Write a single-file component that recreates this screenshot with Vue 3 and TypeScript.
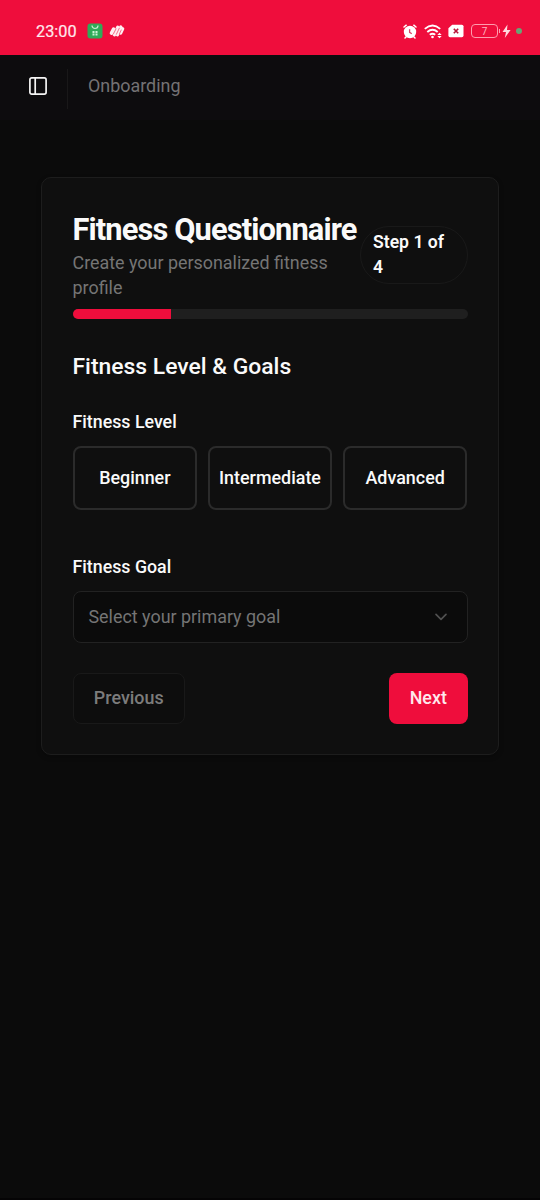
<script setup lang="ts">
import { ref } from 'vue'

const levels = ['Beginner', 'Intermediate', 'Advanced']
const step = ref(1)
const totalSteps = 4
</script>

<template>
  <div class="screen">
    <div class="status">
      <span class="time">23:00</span>
      <svg class="app-icon" width="16" height="16" viewBox="0 0 16 16">
        <rect x="0.5" y="0.5" width="15" height="15" rx="3" fill="#2fab58" />
        <path d="M5 2.5a3 3 0 0 0 6 0" fill="none" stroke="#c5ebcf" stroke-width="1.2" />
        <path d="M5.5 8h2v2h-2zM8.5 8h2v2h-2zM5.5 10.5h2v2h-2zM8.5 10.5h2v2h-2z" fill="#c9f3d5" />
      </svg>
      <svg class="brand-icon" width="16" height="14" viewBox="0 0 16 14" fill="none" stroke="#ffeff2" stroke-linecap="round">
        <path d="M2.5 9.2L4.6 5.2" stroke-width="3.6" />
        <path d="M5.4 10.8L8.8 3.2" stroke-width="3.4" />
        <path d="M8.4 10.8L11.8 3" stroke-width="3.2" />
        <path d="M11.6 9L13.6 4.8" stroke-width="3.4" />
        <path d="M4.4 10L7 4.9M7.4 10.3L10.3 4.2M10.5 9.8L12.2 6" stroke="#ef3a5f" stroke-width="0.7" />
      </svg>
      <div class="status-right">
        <svg class="alarm" width="14" height="15" viewBox="0 0 14 15">
          <circle cx="7" cy="8" r="6.2" fill="#fff" />
          <path d="M1 3L3.2 1.2M13 3L10.8 1.2M3 13L2 14M11 13L12 14" stroke="#fff" stroke-width="1.5" stroke-linecap="round" />
          <path d="M6.6 5.2V8.4L8.8 9.8" fill="none" stroke="#d9446a" stroke-width="1.3" />
        </svg>
        <svg class="wifi" width="19" height="15" viewBox="0 0 19 15" fill="none" stroke="#fff" stroke-width="1.9">
          <path d="M0.8 4.9Q8.5 -1.7 16.2 4.9M3.3 8Q8.5 3.6 13.7 8M5.8 10.8Q8.5 8.7 11.2 10.8" />
          <circle cx="8.5" cy="13" r="1.3" fill="#fff" stroke="none" />
          <path d="M13.3 11L15.5 8.8L17.7 11ZM13.3 12L15.5 14.2L17.7 12Z" fill="#fff" stroke="none" />
        </svg>
        <svg class="sim" width="16" height="14" viewBox="0 0 16 14">
          <path d="M4.2 0.7H13.8Q15.5 0.7 15.5 2.3V11.6Q15.5 13.2 13.8 13.2H2Q0.4 13.2 0.4 11.6V4.3Z" fill="#fff" />
          <path d="M5.8 4.7L10.2 9.3M10.2 4.7L5.8 9.3" stroke="#b91539" stroke-width="1.6" />
        </svg>
        <div class="battery">7</div>
        <svg class="bolt" width="9" height="15" viewBox="0 0 9 15">
          <path d="M5.5 0.5L0.5 8H4L2.8 14L8.6 6H5Z" fill="#ffd9df" />
        </svg>
        <span class="dot"></span>
      </div>
    </div>

    <header class="nav">
      <svg width="20" height="20" viewBox="0 0 20 20" fill="none" stroke="#f5f5f5" stroke-width="1.7">
        <rect x="1.9" y="1.9" width="16.2" height="16.2" rx="1.8" />
        <path d="M7.2 2V18" />
      </svg>
      <span class="divider"></span>
      <span class="crumb">Onboarding</span>
    </header>

    <main class="card">
      <div class="head">
        <div class="intro">
          <h1>Fitness Questionnaire</h1>
          <p>Create your personalized fitness profile</p>
        </div>
        <div class="badge">Step {{ step }} of {{ totalSteps }}</div>
      </div>
      <div class="progress"><div class="fill" :style="{ width: (step / totalSteps) * 100 + '%' }"></div></div>

      <h2>Fitness Level &amp; Goals</h2>

      <div class="label">Fitness Level</div>
      <div class="levels">
        <button v-for="level in levels" :key="level" class="level" type="button">{{ level }}</button>
      </div>

      <div class="label goal-label">Fitness Goal</div>
      <div class="select">
        <span>Select your primary goal</span>
        <svg width="20" height="20" viewBox="0 0 24 24" fill="none" stroke="#515151" stroke-width="2" stroke-linecap="round" stroke-linejoin="round">
          <path d="M6 10l6 6 6-6" />
        </svg>
      </div>

      <div class="actions">
        <button class="btn prev" type="button">Previous</button>
        <button class="btn next" type="button">Next</button>
      </div>
    </main>
  </div>
</template>

<style>
body {
  margin: 0;
  background: #0b0b0b;
}
</style>

<style scoped>
.screen {
  box-sizing: border-box;
  height: 1200px;
  overflow: hidden;
  background: #0b0b0b;
  border-bottom: 2px solid #050405;
  color: #fafafa;
  font-family: Roboto, sans-serif;
  font-size: 17.9px;
}
.screen * {
  box-sizing: border-box;
}
.status {
  height: 55px;
  padding: 7px 18px 0 36px;
  display: flex;
  align-items: center;
  background: #ef0d3c;
}
.time {
  width: 51px;
  font-size: 16.3px;
  color: #ffe9ed;
  -webkit-text-stroke: 0.2px #ffe9ed;
}
.brand-icon {
  margin-left: 6px;
}
.status-right {
  margin-left: auto;
  display: flex;
  align-items: center;
}
.wifi {
  margin-left: 7px;
}
.sim {
  margin-left: 5px;
}
.battery {
  position: relative;
  width: 27px;
  height: 14px;
  margin-left: 7px;
  border: 1px solid #ff9bad;
  border-radius: 4px;
  font-size: 10px;
  line-height: 13px;
  text-align: center;
  color: #ffb5c2;
}
.battery::after {
  content: '';
  position: absolute;
  right: -3px;
  top: 4px;
  width: 1.5px;
  height: 4px;
  background: #ff9bad;
}
.bolt {
  margin-left: 4px;
}
.dot {
  width: 6px;
  height: 6px;
  margin-left: 5px;
  border-radius: 50%;
  background: #68a475;
}
.nav {
  height: 65px;
  padding: 0 28px 3px;
  display: flex;
  align-items: center;
  background: #0d0c0e;
}
.divider {
  width: 1px;
  height: 40px;
  margin: 5px 20px 0 19px;
  background: #191819;
}
.crumb {
  margin-top: -2px;
  color: #747274;
}
.card {
  width: 458px;
  height: 578px;
  margin: 57px 0 0 41px;
  padding: 32.5px 30.5px 0;
  border: 1px solid #1d1d1d;
  border-radius: 10px;
  background: #0f0f0f;
  box-shadow: 0 2px 5px rgba(0, 0, 0, 0.25);
}
.head {
  display: flex;
  align-items: center;
  justify-content: space-between;
}
.intro {
  width: 287px;
  flex: none;
}
h1 {
  margin: 0;
  font-size: 30.8px;
  line-height: 37px;
  font-weight: 700;
  letter-spacing: -0.87px;
  white-space: nowrap;
}
p {
  margin: 2px 0 0;
  line-height: 25.6px;
  color: #757575;
}
.badge {
  width: 108px;
  height: 58px;
  margin-top: -2px;
  padding: 3px 12.5px;
  border: 1px solid #191919;
  border-radius: 29px;
  font-weight: 600;
  font-size: 17.6px;
  line-height: 25.6px;
}
.progress {
  height: 10px;
  margin-top: 8px;
  border-radius: 5px;
  overflow: hidden;
  background: #1f1f1f;
}
.fill {
  height: 100%;
  background: #ef0d3c;
}
h2 {
  margin: 32.5px 0 0;
  font-size: 22.9px;
  line-height: 32px;
  font-weight: 500;
}
.label {
  margin-top: 29px;
  font-size: 17.8px;
  line-height: 20px;
  font-weight: 500;
}
.levels {
  margin-top: 14px;
  display: grid;
  grid-template-columns: repeat(3, 1fr);
  gap: 10.5px;
}
.level {
  height: 64px;
  padding: 0 0 2px;
  border: 2.5px solid #2b2b2b;
  border-radius: 8px;
  background: #0f0f0f;
  color: #fafafa;
  font: 500 17.9px Roboto, sans-serif;
}
.goal-label {
  margin-top: 47px;
}
.select {
  height: 52px;
  margin-top: 14px;
  padding: 0 16px 2px 15px;
  display: flex;
  align-items: center;
  justify-content: space-between;
  border: 1.5px solid #222;
  border-radius: 8px;
  background: #0b0b0b;
  color: #757575;
}
.actions {
  margin-top: 30px;
  display: flex;
  justify-content: space-between;
}
.btn {
  height: 51px;
  padding: 0 0 2px;
  border: 0;
  border-radius: 8px;
  font: 500 17.9px Roboto, sans-serif;
}
.prev {
  width: 112.5px;
  border: 1px solid #191919;
  background: #0d0d0d;
  color: #7c7c7c;
}
.next {
  width: 78.5px;
  background: #ef0d3c;
  color: #ffe8ed;
}
</style>
